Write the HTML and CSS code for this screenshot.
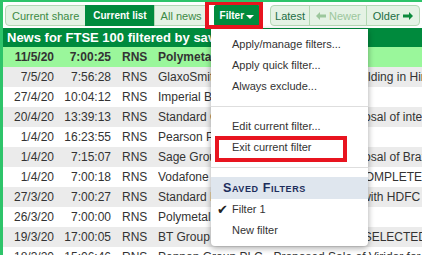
FILE: index.html
```html
<!DOCTYPE html>
<html lang="en">
<head>
    <meta charset="UTF-8">
    <title>News - FTSE 100</title>
    <link rel="stylesheet" href="styles.css">
</head>
<body>

<div class="frame">
    <div class="toolbar">
        <div class="btn-group">
            <span class="btn">Current share</span>
            <span class="btn active">Current list</span>
            <span class="btn">All news</span>
        </div>
        <span class="btn active filter-btn">Filter<span class="caret"></span></span>
        <div class="btn-group">
            <span class="btn nav latest">Latest</span>
            <span class="btn nav disabled newer">
                <svg class="arrow" viewBox="0 0 10 8" width="10" height="8"><path d="M0 4 L4 0 L4 2.5 L10 2.5 L10 5.5 L4 5.5 L4 8 Z"/></svg>Newer
            </span>
            <span class="btn nav older">Older
                <svg class="arrow right" viewBox="0 0 10 8" width="10" height="8"><path d="M10 4 L6 0 L6 2.5 L0 2.5 L0 5.5 L6 5.5 L6 8 Z"/></svg>
            </span>
        </div>
        <span class="btn stub"></span>
    </div>

    <div class="title-bar">News for FTSE 100 filtered by saved filter: Filter 1</div>

    <div class="news-list">
        <div class="row current"><span class="date">11/5/20</span><span class="time">7:00:25</span><span class="src">RNS</span><span class="headline">Polymetal - Trading Update</span></div>
        <div class="row"><span class="date">7/5/20</span><span class="time">7:56:28</span><span class="src">RNS</span><span class="headline">GlaxoSmithKline PLC - Sale of shareholding in Hindustan Unilever</span></div>
        <div class="row"><span class="date">27/4/20</span><span class="time">10:04:12</span><span class="src">RNS</span><span class="headline">Imperial Brands PLC - Dividend</span></div>
        <div class="row"><span class="date">20/4/20</span><span class="time">13:39:13</span><span class="src">RNS</span><span class="headline">Standard Chartered PLC - Agreed disposal of interest in PermataBank</span></div>
        <div class="row"><span class="date">1/4/20</span><span class="time">16:23:55</span><span class="src">RNS</span><span class="headline">Pearson PLC - Update on COVID-19</span></div>
        <div class="row"><span class="date">1/4/20</span><span class="time">7:15:07</span><span class="src">RNS</span><span class="headline">Sage Group PLC – Completion of Disposal of Brazil business</span></div>
        <div class="row"><span class="date">1/4/20</span><span class="time">7:00:18</span><span class="src">RNS</span><span class="headline">Vodafone Group PLC – VODAFONE COMPLETES SALE OF STAKE</span></div>
        <div class="row"><span class="date">27/3/20</span><span class="time">7:00:27</span><span class="src">RNS</span><span class="headline">Standard Life Aberdeen - Agreements with HDFC Life</span></div>
        <div class="row"><span class="date">26/3/20</span><span class="time">7:00:00</span><span class="src">RNS</span><span class="headline">Polymetal - Final Results 2019</span></div>
        <div class="row"><span class="date">19/3/20</span><span class="time">17:00:05</span><span class="src">RNS</span><span class="headline">BT Group PLC - Ofcom statement:  BT SELECTED</span></div>
        <div class="row"><span class="date">18/3/20</span><span class="time">15:06:46</span><span class="src">RNS</span><span class="headline">Pennon Group PLC - Proposed Sale of Viridor for £4.2 billion</span></div>
    </div>

    <!-- dropdown menu of the Filter button -->
    <div class="menu">
        <div class="menu-item">Apply/manage filters...</div>
        <div class="menu-item">Apply quick filter...</div>
        <div class="menu-item">Always exclude...</div>
        <div class="menu-sep"></div>
        <div class="menu-item">Edit current filter...</div>
        <div class="menu-item">Exit current filter</div>
        <div class="menu-sep"></div>
        <div class="menu-header">Saved Filters</div>
        <div class="menu-item"><span class="check">&#10004;</span>Filter 1</div>
        <div class="menu-item">New filter</div>
    </div>

    <!-- red highlight boxes -->
    <div class="mark mark-filter"></div>
    <div class="mark mark-exit"></div>
</div>

</body>
</html>
```

FILE: styles.css
```css
body {
    margin: 0;
    font-family: "Liberation Sans", Arial, sans-serif;
    color: #333;
    background-color: #fff;
}

.frame {
    position: relative;
    height: 255px;
    overflow: hidden;
    border-top: 2px solid #2ec46a;
    border-left: 3px solid #2ec46a;
    box-sizing: border-box;
}

/* toolbar */

.toolbar {
    display: flex;
    align-items: center;
    padding: 3px 0 2px 2px;
    white-space: nowrap;
}

.btn-group {
    display: flex;
    flex-shrink: 0;
}

.btn {
    display: flex;
    align-items: center;
    flex-shrink: 0;
    height: 21px;
    box-sizing: border-box;
    padding: 0 6px;
    font-size: 11px;
    color: #3d8a45;
    background-color: #e4f2e4;
    border: 1px solid #b4d8b4;
    margin-left: -1px;
}

.btn-group .btn:first-child {
    border-radius: 4px 0 0 4px;
    margin-left: 0;
}

.btn-group .btn:last-child {
    border-radius: 0 4px 4px 0;
}

.btn.active {
    background-color: #008a3d;
    border-color: #008a3d;
    color: #fff;
    font-weight: bold;
    font-size: 10px;
    padding: 0 7px;
}

.filter-btn {
    margin: 0 10px 0 5px;
    border-radius: 2px;
}

.btn.filter-btn {
    padding: 0 5px;
}

.caret {
    width: 0;
    height: 0;
    margin-left: 2px;
    margin-top: 2px;
    border-left: 4px solid transparent;
    border-right: 4px solid transparent;
    border-top: 4px solid #fff;
}

.btn.nav {
    color: #1c6e45;
}

.btn.latest {
    padding: 0 4px;
}

.btn.newer {
    padding: 0 5px 0 6px;
}

.btn.nav.disabled {
    color: #9cc79c;
}

.arrow {
    fill: #0c8a3c;
}

.disabled .arrow {
    fill: #9cc79c;
    margin-right: 3px;
}

.arrow.right {
    margin-left: 3px;
}

.btn.stub {
    margin-left: 4px;
    width: 6px;
    padding: 0;
    border-color: #888;
    border-right: none;
    border-radius: 3px 0 0 3px;
    background-color: #fff;
}

/* list */

.title-bar {
    background-color: #008a3d;
    color: #fff;
    font-weight: bold;
    font-size: 13px;
    height: 19px;
    line-height: 19px;
    padding-left: 4px;
    white-space: nowrap;
    overflow: hidden;
}

.row {
    display: flex;
    height: 20px;
    line-height: 20px;
    font-size: 12px;
    white-space: nowrap;
}

.row > span {
    flex-shrink: 0;
}

.row:nth-child(even) {
    background-color: #ebebeb;
}

.row.current {
    background-color: #9af79b;
    font-weight: bold;
}

.date {
    width: 51px;
    text-align: right;
}

.time {
    width: 57px;
    text-align: right;
}

.src {
    width: 36px;
    padding-left: 11px;
}

.row > .headline {
    flex: 1;
    flex-shrink: 1;
    min-width: 0;
    overflow: hidden;
}

/* dropdown */

.menu {
    position: absolute;
    left: 208px;
    top: 27px;
    width: 157px;
    padding: 5px 0;
    background-color: #fff;
    border-radius: 0 0 4px 4px;
    box-shadow: 0 2px 6px rgba(0, 0, 0, 0.35);
    font-size: 11px;
    color: #333;
}

.menu-item {
    position: relative;
    height: 21px;
    line-height: 21px;
    padding-left: 21px;
}

.menu-sep {
    height: 1px;
    margin: 9px 0;
    background-color: #dedede;
}

.menu-header {
    height: 22px;
    line-height: 22px;
    padding-left: 12px;
    background-color: #dfe6ee;
    color: #1d2d5c;
    font-weight: bold;
    font-size: 12.5px;
    font-variant: small-caps;
    letter-spacing: 0.6px;
}

.check {
    position: absolute;
    left: 6px;
    top: 0;
    font-family: "DejaVu Sans", sans-serif;
    font-size: 13px;
    color: #222;
}

.mark {
    position: absolute;
    border: 4px solid #e8141f;
}

.mark-filter {
    left: 202px;
    top: -1px;
    width: 50px;
    height: 20px;
}

.mark-exit {
    left: 212px;
    top: 134px;
    width: 124px;
    height: 18px;
}
```
